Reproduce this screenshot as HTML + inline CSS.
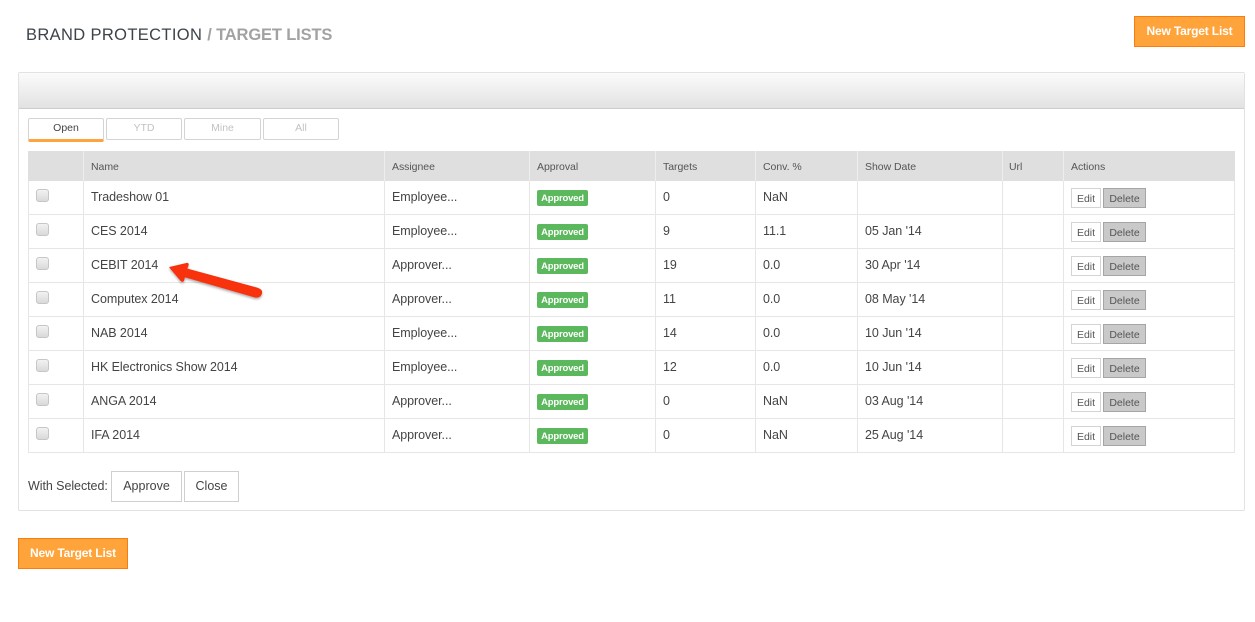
<!DOCTYPE html>
<html><head><meta charset="utf-8">
<style>
html,body{margin:0;padding:0;background:#fff;width:1255px;height:622px;overflow:hidden;font-family:"Liberation Sans",sans-serif;color:#444}
.a{position:absolute;box-sizing:border-box;white-space:nowrap}
.cta{background:#ffa33b;border:1px solid #fb7d10;color:#fff;font-weight:bold;font-size:12px;letter-spacing:-.17px;text-align:center;height:31px;line-height:28px}
.tab{top:118px;height:22px;border:1px solid #d4d4d4;border-radius:2px;text-align:center;font-size:10.5px;line-height:18px;color:#c2c2c2}
.h{top:151px;height:30px;line-height:32px;font-size:10.5px;letter-spacing:-.04px;color:#555;background:#dfdfdf}
.l{background:#e6e6e6}
.t{font-size:12.5px;letter-spacing:-.06px;color:#444;line-height:16px}
.cb{left:36px;width:13px;height:13px;border:1px solid #c6c6c6;border-radius:3px;background:linear-gradient(#f2f2f2,#d9d9d9)}
.b{left:537px;width:51px;height:16px;background:#5cb85c;border-radius:2px;color:#fff;font-weight:bold;font-size:9.5px;line-height:17px;text-align:center;letter-spacing:-.2px}
.e{left:1071px;width:30px;height:20px;border:1px solid #d4d4d4;background:#fff;font-size:10.5px;line-height:20px;text-align:center;color:#555}
.d{left:1103px;width:43px;height:20px;border:1px solid #a5a5a5;background:#c9c9c9;font-size:10.5px;line-height:20px;text-align:center;color:#555}
.w{height:31px;border:1px solid #cfcfcf;background:#fff;font-size:12.5px;line-height:28px;text-align:center;color:#444}
</style></head><body>
<div class="a" style="left:26px;top:25px;font-size:16.5px;line-height:20px;letter-spacing:.36px;color:#3d434a">BRAND PROTECTION <span style="color:#a2a2a2;font-weight:bold;letter-spacing:-.15px">/ TARGET LISTS</span></div>
<div class="a cta" style="left:1134px;top:16px;width:111px">New Target List</div>

<div class="a" style="left:18px;top:72px;width:1227px;height:439px;border:1px solid #e2e2e2;border-radius:2px"></div>
<div class="a" style="left:19px;top:73px;width:1225px;height:36px;background:linear-gradient(#fbfbfb,#e2e2e2);border-bottom:1px solid #cdcdcd"></div>

<div class="a tab" style="left:28px;width:76px;color:#444;border-bottom:3px solid #ffa33b;height:24px">Open</div>
<div class="a tab" style="left:106px;width:76px">YTD</div>
<div class="a tab" style="left:184px;width:77px">Mine</div>
<div class="a tab" style="left:263px;width:76px">All</div>

<div class="a" style="left:28px;top:151px;width:1207px;height:30px;background:#dfdfdf"></div>
<div class="a h" style="left:91px">Name</div>
<div class="a h" style="left:392px">Assignee</div>
<div class="a h" style="left:537px">Approval</div>
<div class="a h" style="left:663px">Targets</div>
<div class="a h" style="left:763px">Conv. %</div>
<div class="a h" style="left:865px">Show Date</div>
<div class="a h" style="left:1009px">Url</div>
<div class="a h" style="left:1071px">Actions</div>

<!-- column lines -->
<div class="a l" style="left:28px;top:181px;width:1px;height:272px"></div>
<div class="a" style="left:83px;top:151px;width:1px;height:30px;background:#eee"></div><div class="a l" style="left:83px;top:181px;width:1px;height:272px"></div>
<div class="a" style="left:384px;top:151px;width:1px;height:30px;background:#eee"></div><div class="a l" style="left:384px;top:181px;width:1px;height:272px"></div>
<div class="a" style="left:529px;top:151px;width:1px;height:30px;background:#eee"></div><div class="a l" style="left:529px;top:181px;width:1px;height:272px"></div>
<div class="a" style="left:655px;top:151px;width:1px;height:30px;background:#eee"></div><div class="a l" style="left:655px;top:181px;width:1px;height:272px"></div>
<div class="a" style="left:755px;top:151px;width:1px;height:30px;background:#eee"></div><div class="a l" style="left:755px;top:181px;width:1px;height:272px"></div>
<div class="a" style="left:857px;top:151px;width:1px;height:30px;background:#eee"></div><div class="a l" style="left:857px;top:181px;width:1px;height:272px"></div>
<div class="a" style="left:1002px;top:151px;width:1px;height:30px;background:#eee"></div><div class="a l" style="left:1002px;top:181px;width:1px;height:272px"></div>
<div class="a" style="left:1063px;top:151px;width:1px;height:30px;background:#eee"></div><div class="a l" style="left:1063px;top:181px;width:1px;height:272px"></div>
<div class="a l" style="left:1234px;top:181px;width:1px;height:272px"></div>
<!-- row lines -->
<div class="a l" style="left:28px;top:214px;width:1207px;height:1px"></div>
<div class="a l" style="left:28px;top:248px;width:1207px;height:1px"></div>
<div class="a l" style="left:28px;top:282px;width:1207px;height:1px"></div>
<div class="a l" style="left:28px;top:316px;width:1207px;height:1px"></div>
<div class="a l" style="left:28px;top:350px;width:1207px;height:1px"></div>
<div class="a l" style="left:28px;top:384px;width:1207px;height:1px"></div>
<div class="a l" style="left:28px;top:418px;width:1207px;height:1px"></div>
<div class="a l" style="left:28px;top:452px;width:1207px;height:1px"></div>

<!-- row 1 -->
<div class="a cb" style="top:189px"></div><div class="a t" style="left:91px;top:189px">Tradeshow 01</div><div class="a t" style="left:392px;top:189px">Employee...</div><div class="a b" style="top:190px">Approved</div><div class="a t" style="left:663px;top:189px">0</div><div class="a t" style="left:763px;top:189px">NaN</div><div class="a e" style="top:188px">Edit</div><div class="a d" style="top:188px">Delete</div>
<!-- row 2 -->
<div class="a cb" style="top:223px"></div><div class="a t" style="left:91px;top:223px">CES 2014</div><div class="a t" style="left:392px;top:223px">Employee...</div><div class="a b" style="top:224px">Approved</div><div class="a t" style="left:663px;top:223px">9</div><div class="a t" style="left:763px;top:223px">11.1</div><div class="a t" style="left:865px;top:223px">05 Jan '14</div><div class="a e" style="top:222px">Edit</div><div class="a d" style="top:222px">Delete</div>
<!-- row 3 -->
<div class="a cb" style="top:257px"></div><div class="a t" style="left:91px;top:257px">CEBIT 2014</div><div class="a t" style="left:392px;top:257px">Approver...</div><div class="a b" style="top:258px">Approved</div><div class="a t" style="left:663px;top:257px">19</div><div class="a t" style="left:763px;top:257px">0.0</div><div class="a t" style="left:865px;top:257px">30 Apr '14</div><div class="a e" style="top:256px">Edit</div><div class="a d" style="top:256px">Delete</div>
<!-- row 4 -->
<div class="a cb" style="top:291px"></div><div class="a t" style="left:91px;top:291px">Computex 2014</div><div class="a t" style="left:392px;top:291px">Approver...</div><div class="a b" style="top:292px">Approved</div><div class="a t" style="left:663px;top:291px">11</div><div class="a t" style="left:763px;top:291px">0.0</div><div class="a t" style="left:865px;top:291px">08 May '14</div><div class="a e" style="top:290px">Edit</div><div class="a d" style="top:290px">Delete</div>
<!-- row 5 -->
<div class="a cb" style="top:325px"></div><div class="a t" style="left:91px;top:325px">NAB 2014</div><div class="a t" style="left:392px;top:325px">Employee...</div><div class="a b" style="top:326px">Approved</div><div class="a t" style="left:663px;top:325px">14</div><div class="a t" style="left:763px;top:325px">0.0</div><div class="a t" style="left:865px;top:325px">10 Jun '14</div><div class="a e" style="top:324px">Edit</div><div class="a d" style="top:324px">Delete</div>
<!-- row 6 -->
<div class="a cb" style="top:359px"></div><div class="a t" style="left:91px;top:359px">HK Electronics Show 2014</div><div class="a t" style="left:392px;top:359px">Employee...</div><div class="a b" style="top:360px">Approved</div><div class="a t" style="left:663px;top:359px">12</div><div class="a t" style="left:763px;top:359px">0.0</div><div class="a t" style="left:865px;top:359px">10 Jun '14</div><div class="a e" style="top:358px">Edit</div><div class="a d" style="top:358px">Delete</div>
<!-- row 7 -->
<div class="a cb" style="top:393px"></div><div class="a t" style="left:91px;top:393px">ANGA 2014</div><div class="a t" style="left:392px;top:393px">Approver...</div><div class="a b" style="top:394px">Approved</div><div class="a t" style="left:663px;top:393px">0</div><div class="a t" style="left:763px;top:393px">NaN</div><div class="a t" style="left:865px;top:393px">03 Aug '14</div><div class="a e" style="top:392px">Edit</div><div class="a d" style="top:392px">Delete</div>
<!-- row 8 -->
<div class="a cb" style="top:427px"></div><div class="a t" style="left:91px;top:427px">IFA 2014</div><div class="a t" style="left:392px;top:427px">Approver...</div><div class="a b" style="top:428px">Approved</div><div class="a t" style="left:663px;top:427px">0</div><div class="a t" style="left:763px;top:427px">NaN</div><div class="a t" style="left:865px;top:427px">25 Aug '14</div><div class="a e" style="top:426px">Edit</div><div class="a d" style="top:426px">Delete</div>

<div class="a t" style="left:28px;top:478px">With Selected:</div>
<div class="a w" style="left:111px;top:471px;width:71px">Approve</div>
<div class="a w" style="left:184px;top:471px;width:55px">Close</div>

<div class="a cta" style="left:18px;top:538px;width:110px">New Target List</div>

<svg class="a" style="left:160px;top:255px" width="110" height="50" viewBox="160 255 110 50">
<defs><filter id="s" x="-20%" y="-30%" width="140%" height="170%"><feDropShadow dx="0" dy="1.5" stdDeviation="1.2" flood-color="#000" flood-opacity=".35"/></filter></defs>
<path d="M170 267.5 L187 263.5 Q188.5 263.5 188 265 L186.5 269 L258 288.5 Q262 290 261.5 293 Q260.5 297.5 255.5 297 L184.5 276.5 L183.5 280.5 Q182.5 282 181 280.5 Z" fill="#f7300f" stroke="#f7300f" stroke-width="1.2" stroke-linejoin="round" filter="url(#s)"/>
</svg>
</body></html>
